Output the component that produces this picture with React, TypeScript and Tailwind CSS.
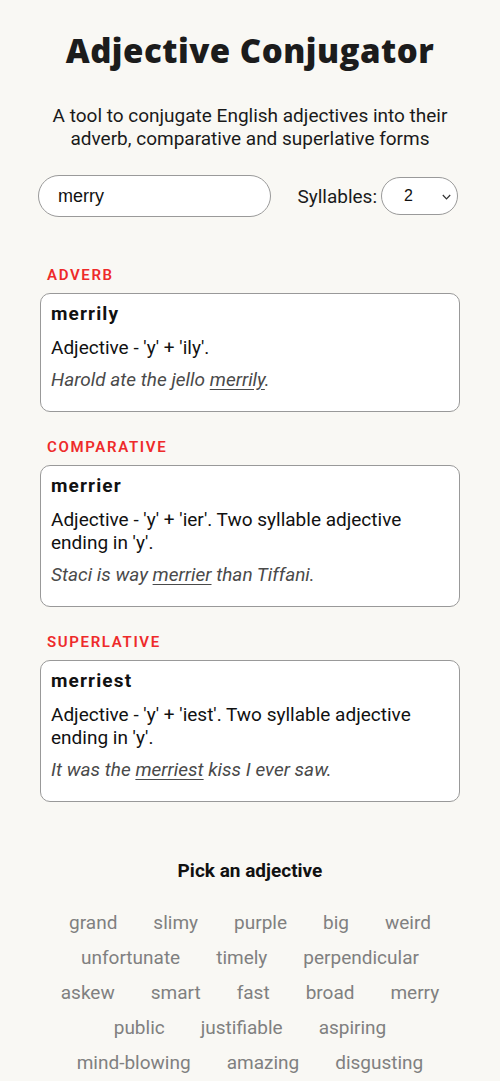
const sections = [
  {
    label: "Adverb",
    word: "merrily",
    rule: "Adjective - 'y' + 'ily'.",
    example: ["Harold ate the jello ", "merrily", "."],
  },
  {
    label: "Comparative",
    word: "merrier",
    rule: "Adjective - 'y' + 'ier'. Two syllable adjective ending in 'y'.",
    example: ["Staci is way ", "merrier", " than Tiffani."],
  },
  {
    label: "Superlative",
    word: "merriest",
    rule: "Adjective - 'y' + 'iest'. Two syllable adjective ending in 'y'.",
    example: ["It was the ", "merriest", " kiss I ever saw."],
  },
]

const adjectives = [
  "grand",
  "slimy",
  "purple",
  "big",
  "weird",
  "unfortunate",
  "timely",
  "perpendicular",
  "askew",
  "smart",
  "fast",
  "broad",
  "merry",
  "public",
  "justifiable",
  "aspiring",
  "mind-blowing",
  "amazing",
  "disgusting",
]

export default function App() {
  return (
    <div className="min-h-screen w-full bg-[#f9f8f4] text-[#111] font-['Roboto',sans-serif]">
      <div className="w-[420px] mx-auto pt-[29px] pb-10 flex flex-col">
        {/* Header */}
        <h1 className="text-center text-[33px] leading-[44px] font-extrabold text-[#1c1c1c] font-['Open_Sans',sans-serif] tracking-[0.015em]">
          Adjective Conjugator
        </h1>
        <p className="mt-[31px] text-center text-[19px] leading-[23px] text-[#1a1a1a]">
          A tool to conjugate English adjectives into their adverb, comparative and superlative forms
        </p>

        {/* Controls */}
        <div className="mt-[25px] -ml-[2px] mr-[2px] flex items-center justify-between">
          <input
            defaultValue="merry"
            className="w-[233px] h-[42px] rounded-full border border-[#9a9a9a] bg-white pl-[19px] text-[18px] text-[#111] outline-none font-['Liberation_Sans',Arial,sans-serif]"
          />
          <div className="flex items-center">
            <span className="text-[19px] leading-[23px] text-[#1a1a1a]">Syllables:</span>
            <div className="ml-[4px] relative w-[77px] h-[38px] rounded-full border border-[#9a9a9a] bg-white flex items-center">
              <span className="pl-[22px] text-[16px] text-[#111] font-['Liberation_Sans',Arial,sans-serif]">2</span>
              <svg className="absolute right-[6px] top-[16px]" width="9" height="6" viewBox="0 0 9 6" fill="none">
                <path d="M0.8 1 4.5 4.8 8.2 1" stroke="#333" strokeWidth="1.2" />
              </svg>
            </div>
          </div>
        </div>

        {/* Results */}
        <div className="mt-[49px] flex flex-col gap-[26px]">
          {sections.map((s) => (
            <div key={s.label} className="flex flex-col">
              <div className="pl-[7px] text-[15px] leading-[18px] font-semibold uppercase tracking-[0.11em] text-[#ee2a2a]">
                {s.label}
              </div>
              <div className="mt-[9px] rounded-[10px] border border-[#999] bg-white px-[10px] pt-[8px] pb-[20px]">
                <div className="text-[19px] leading-[24px] font-bold tracking-[0.06em] text-[#111]">{s.word}</div>
                <div className="mt-[10px] text-[19px] leading-[23px] text-[#111] pr-6">{s.rule}</div>
                <div className="mt-[9px] text-[19px] leading-[23px] italic text-[#4a4a4a]">
                  {s.example[0]}
                  <span className="underline underline-offset-[3px]">{s.example[1]}</span>
                  {s.example[2]}
                </div>
              </div>
            </div>
          ))}
        </div>

        {/* Adjective list */}
        <h2 className="mt-[57px] text-center text-[19px] leading-[24px] font-bold text-[#111]">Pick an adjective</h2>
        <div className="mt-[22px] -mx-[10px] flex flex-wrap justify-center">
          {adjectives.map((a) => (
            <span key={a} className="px-[18px] text-[19px] leading-[35px] text-[#808080] cursor-pointer">
              {a}
            </span>
          ))}
        </div>
      </div>
    </div>
  )
}
